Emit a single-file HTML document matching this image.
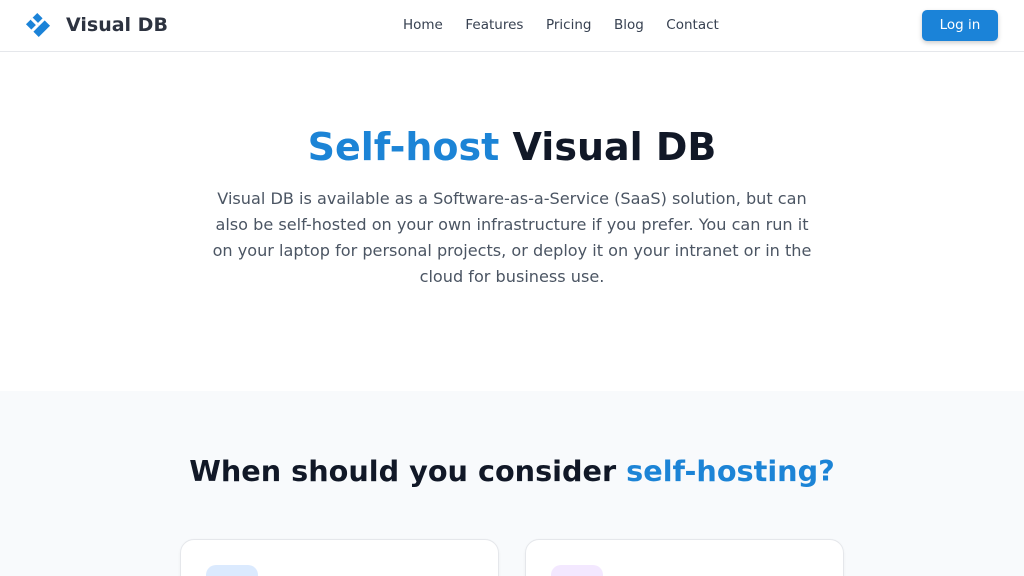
<!DOCTYPE html>
<html><head><meta charset="utf-8"><style>
*{margin:0;padding:0;box-sizing:border-box}
html,body{width:1024px;height:576px;overflow:hidden}
body{font-family:"DejaVu Sans","Liberation Sans",sans-serif;background:#fff;color:#111827}
.nav{height:52px;border-bottom:1px solid #e5e7eb;position:relative;background:#fff}
.logo{position:absolute;left:24px;top:11px}
.brand{position:absolute;left:66px;top:14px;font-size:19px;font-weight:bold;color:#2d3340}
.links{position:absolute;left:403px;top:17px;font-size:13.5px;color:#374151;white-space:nowrap}
.links span{margin-right:22.5px}
.btn{position:absolute;left:922px;top:10px;width:76px;height:31px;background:#1b83d8;color:#fff;border-radius:5px;font-size:13.5px;text-align:center;line-height:31px;box-shadow:0 2px 5px rgba(0,0,0,.2)}
.hero{height:339px;text-align:center}
h1{font-size:38px;font-weight:bold;padding-top:71px;line-height:48px;color:#111827}
.blue{color:#1c84d6}
.hero p{width:600px;margin:15px auto 0;font-size:16.1px;line-height:26px;color:#4b5563}
.sec{background:#f8fafc;height:185px;position:relative;overflow:hidden}
h2{font-size:28.7px;font-weight:bold;text-align:center;padding-top:61px;line-height:38px}
.card{position:absolute;top:148px;width:319px;height:80px;background:#fff;border:1px solid #e5e7eb;border-radius:14px;box-shadow:0 1px 3px rgba(0,0,0,.04)}
.ic{position:absolute;left:25px;top:25px;width:52px;height:40px;border-radius:10px}
</style></head><body>
<div class="nav">
<svg class="logo" width="28" height="28" viewBox="0 0 28 28"><g transform="rotate(45 14 14)"><rect x="5" y="6" width="18" height="16" fill="#1b83d8"/><rect x="12.5" y="4" width="3" height="10" fill="#fff"/><rect x="12.5" y="14" width="3" height="10" fill="#fff" transform="translate(0 0)"/><rect x="5" y="12.5" width="8" height="3" fill="#fff"/></g></svg>
<div class="brand">Visual DB</div>
<div class="links"><span>Home</span><span>Features</span><span>Pricing</span><span>Blog</span><span>Contact</span></div>
<div class="btn">Log in</div>
</div>
<div class="hero">
<h1><span class="blue">Self-host</span> Visual DB</h1>
<p>Visual DB is available as a Software-as-a-Service (SaaS) solution, but can also be self-hosted on your own infrastructure if you prefer. You can run it on your laptop for personal projects, or deploy it on your intranet or in the cloud for business use.</p>
</div>
<div class="sec">
<h2>When should you consider <span class="blue">self-hosting?</span></h2>
<div class="card" style="left:180px"><div class="ic" style="background:#dbeafe"></div></div>
<div class="card" style="left:525px"><div class="ic" style="background:#f3e8ff"></div></div>
</div>
</body></html>
